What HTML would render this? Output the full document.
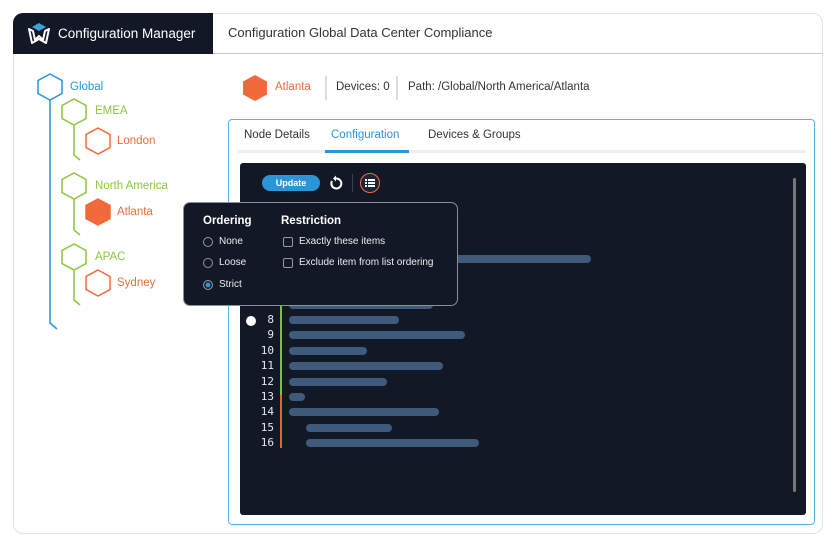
<!DOCTYPE html>
<html><head><meta charset="utf-8"><style>
*{margin:0;padding:0;box-sizing:border-box}
body{width:838px;height:547px;background:#fff;font-family:"Liberation Sans","DejaVu Sans",sans-serif;position:relative;overflow:hidden}
.a{position:absolute}
.t{position:absolute;font-size:11px;white-space:nowrap}
.bar{position:absolute;height:8px;border-radius:4px;background:#405a7c}
.num{position:absolute;width:30px;text-align:right;left:244px;font-family:"DejaVu Sans Mono","Liberation Mono",monospace;font-size:11px;color:#e8e8e8}
.tr{font-size:11.5px}
</style></head><body>
<div class="a" style="left:13px;top:13px;width:810px;height:521px;border:1px solid #e2e2e2;border-radius:10px"></div>
<div class="a" style="left:13px;top:13px;width:200px;height:41px;background:#121826;border-radius:10px 0 0 0"></div>
<div class="a" style="left:213px;top:53px;width:610px;height:1px;background:#c8c8c8"></div>
<svg class="a" style="left:27px;top:22px" width="24" height="24" viewBox="0 0 24 24"><path d="M12 1 L19 5 L12 9 L5 5Z" fill="#3ea0de"/><path d="M2 7 L6 9 L8 18 L12 14 L16 18 L18 9 L22 7 L19 21 L12 17 L5 21Z" fill="none" stroke="#fff" stroke-width="2" stroke-linejoin="round"/></svg>
<div class="t" style="left:58px;top:26px;font-size:13.5px;color:#fff">Configuration Manager</div>
<div class="t" style="left:228px;top:25px;font-size:13px;color:#333">Configuration Global Data Center Compliance</div>

<svg class="a" style="left:0;top:0" width="300" height="340">
<g fill="none" stroke-width="1.5">
<path d="M50 74 L62 80.5 L62 93.5 L50 100 L38 93.5 L38 80.5Z M50 100 L50 323 L57 329" stroke="#2a96d8"/>
<g stroke="#8cc63f">
<path d="M74 99 L86 105.5 L86 118.5 L74 125 L62 118.5 L62 105.5Z M74 125 L74 155 L80 160"/>
<path d="M74 173 L86 179.5 L86 192.5 L74 199 L62 192.5 L62 179.5Z M74 199 L74 230 L80 235"/>
<path d="M74 244 L86 250.5 L86 263.5 L74 270 L62 263.5 L62 250.5Z M74 270 L74 300 L80 305"/>
</g>
<g stroke="#f26a3c">
<path d="M98 128 L110 134.5 L110 147.5 L98 154 L86 147.5 L86 134.5Z"/>
<path d="M98 199 L110 205.5 L110 218.5 L98 225 L86 218.5 L86 205.5Z" fill="#f26a3c"/>
<path d="M98 270 L110 276.5 L110 289.5 L98 296 L86 289.5 L86 276.5Z"/>
</g></g>
<path d="M255 75 L267 81.5 L267 94.5 L255 101 L243 94.5 L243 81.5Z" fill="#f26a3c"/>
</svg>
<div class="t tr" style="left:70px;top:81px;color:#2a96d8">Global</div>
<div class="t tr" style="left:95px;top:105px;color:#8cc63f">EMEA</div>
<div class="t tr" style="left:117px;top:135px;color:#f26a3c">London</div>
<div class="t tr" style="left:95px;top:180px;color:#8cc63f">North America</div>
<div class="t tr" style="left:117px;top:206px;color:#f26a3c">Atlanta</div>
<div class="t tr" style="left:95px;top:251px;color:#8cc63f">APAC</div>
<div class="t tr" style="left:117px;top:277px;color:#f26a3c">Sydney</div>

<div class="t tr" style="left:275px;top:81px;color:#f26a3c">Atlanta</div>
<div class="a" style="left:325px;top:76px;width:2px;height:24px;background:#ddd"></div>
<div class="t tr" style="left:336px;top:81px;color:#333">Devices: 0</div>
<div class="a" style="left:396px;top:76px;width:2px;height:24px;background:#ddd"></div>
<div class="t tr" style="left:408px;top:81px;color:#333">Path: /Global/North America/Atlanta</div>

<div class="a" style="left:228px;top:119px;width:587px;height:406px;border:1px solid #5ab4e0;border-radius:4px"></div>
<div class="a" style="left:238px;top:150px;width:568px;height:3px;background:#efefef"></div>
<div class="t tr" style="left:244px;top:129px;color:#333">Node Details</div>
<div class="t tr" style="left:331px;top:129px;color:#2a96d8">Configuration</div>
<div class="a" style="left:325px;top:150px;width:84px;height:3px;background:#2a96d8"></div>
<div class="t tr" style="left:428px;top:129px;color:#333">Devices &amp; Groups</div>

<div class="a" style="left:240px;top:163px;width:566px;height:352px;background:#121826;border-radius:3px"></div>
<div class="a" style="left:793px;top:178px;width:3px;height:314px;background:#777;border-radius:2px"></div>
<div class="a" style="left:262px;top:175px;width:58px;height:16px;background:#2a96d8;border-radius:8px;color:#fff;font-size:9px;font-weight:bold;text-align:center;line-height:16px">Update</div>
<svg class="a" style="left:328px;top:175px" width="16" height="16" viewBox="0 0 16 16"><path d="M4 6 A5 5 0 1 0 8 3.5" fill="none" stroke="#fff" stroke-width="2"/><path d="M8 0.5 L8 6.5 L5 3.5Z" fill="#fff"/></svg>
<div class="a" style="left:352px;top:174px;width:1px;height:18px;background:#3a4250"></div>
<div class="a" style="left:360px;top:173px;width:20px;height:20px;border:1.5px solid #f26a3c;border-radius:50%;background:#1c2536"></div>
<svg class="a" style="left:364px;top:177px" width="12" height="12" viewBox="0 0 12 12" fill="#fff"><rect x="1" y="2" width="2" height="2"/><rect x="4" y="2" width="7" height="2"/><rect x="1" y="5" width="2" height="2"/><rect x="4" y="5" width="7" height="2"/><rect x="1" y="8" width="2" height="2"/><rect x="4" y="8" width="7" height="2"/></svg>

<div class="bar" style="left:289px;top:255px;width:302px"></div>
<div class="bar" style="left:289px;top:301px;width:144px"></div>
<div class="a" style="left:280px;top:300px;width:2px;height:95px;background:#7fbf3c"></div>
<div class="a" style="left:280px;top:395px;width:2px;height:53px;background:#e0663a"></div>
<div class="a" style="left:246px;top:316px;width:10px;height:10px;border-radius:50%;background:#fff"></div>
<div class="num" style="top:313px">8</div><div class="bar" style="left:289px;top:316px;width:110px"></div>
<div class="num" style="top:328px">9</div><div class="bar" style="left:289px;top:331px;width:176px"></div>
<div class="num" style="top:344px">10</div><div class="bar" style="left:289px;top:347px;width:78px"></div>
<div class="num" style="top:359px">11</div><div class="bar" style="left:289px;top:362px;width:154px"></div>
<div class="num" style="top:375px">12</div><div class="bar" style="left:289px;top:378px;width:98px"></div>
<div class="num" style="top:390px">13</div><div class="bar" style="left:289px;top:393px;width:16px"></div>
<div class="num" style="top:405px">14</div><div class="bar" style="left:289px;top:408px;width:150px"></div>
<div class="num" style="top:421px">15</div><div class="bar" style="left:306px;top:424px;width:86px"></div>
<div class="num" style="top:436px">16</div><div class="bar" style="left:306px;top:439px;width:173px"></div>

<div class="a" style="left:183px;top:202px;width:275px;height:104px;background:#121826;border:1px solid #8a8f98;border-radius:7px"></div>
<div class="t" style="left:203px;top:215px;color:#fff;font-weight:bold;font-size:11.5px">Ordering</div>
<div class="t" style="left:281px;top:215px;color:#fff;font-weight:bold;font-size:11.5px">Restriction</div>
<div class="a" style="left:203px;top:237px;width:10px;height:10px;border:1px solid #999;border-radius:50%"></div>
<div class="t" style="left:219px;top:236px;color:#eee;font-size:10px">None</div>
<div class="a" style="left:203px;top:258px;width:10px;height:10px;border:1px solid #999;border-radius:50%"></div>
<div class="t" style="left:219px;top:257px;color:#eee;font-size:10px">Loose</div>
<div class="a" style="left:203px;top:280px;width:10px;height:10px;border:1px solid #999;border-radius:50%;background:#2a96d8;box-shadow:inset 0 0 0 1.5px #121826"></div>
<div class="t" style="left:219px;top:279px;color:#eee;font-size:10px">Strict</div>
<div class="a" style="left:283px;top:237px;width:10px;height:10px;border:1px solid #999;border-radius:2px"></div>
<div class="t" style="left:299px;top:236px;color:#eee;font-size:10px">Exactly these items</div>
<div class="a" style="left:283px;top:258px;width:10px;height:10px;border:1px solid #999;border-radius:2px"></div>
<div class="t" style="left:299px;top:257px;color:#eee;font-size:10px">Exclude item from list ordering</div>
</body></html>
